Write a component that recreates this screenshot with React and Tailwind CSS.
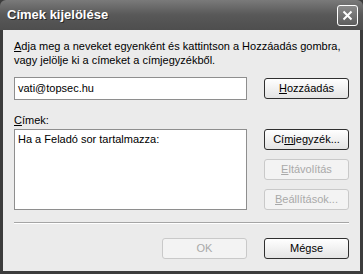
const font = { fontFamily: '"Liberation Sans", Arial, sans-serif' };

const Btn = ({ children, disabled, className = "" }) => (
  <div
    className={`flex items-center justify-center h-[21px] w-[85px] rounded-[3px] border text-[11px] ${
      disabled
        ? "border-[#c9c9c9] bg-[#f3f3f3] text-[#a9a9a9]"
        : "border-[#2f2f2f] bg-linear-to-b from-white to-[#e4e4e4] text-black"
    } ${className}`}
  >
    {children}
  </div>
);

export default function App() {
  return (
    <div className="w-[363px] h-[274px] flex flex-col bg-[#3c3c3c] select-none" style={font}>
      <div className="h-[30px] flex items-center justify-between pl-[7px] pr-[5px] rounded-t-[6px] bg-linear-to-b from-[#7a7a7a] via-[#585858] to-[#4e4e4e]">
        <span
          className="text-white font-bold text-[13px]"
          style={{ textShadow: "1px 1px 0 #2a2a2a" }}
        >
          Címek kijelölése
        </span>
        <div className="w-[21px] h-[21px] mt-[1px] rounded-[3px] border border-white bg-linear-to-b from-[#8a8a8a] to-[#5e5e5e] flex items-center justify-center">
          <svg width="11" height="11" viewBox="0 0 11 11">
            <path d="M1.5 1.5 L9.5 9.5 M9.5 1.5 L1.5 9.5" stroke="white" strokeWidth="2" />
          </svg>
        </div>
      </div>

      <div className="flex-1 mx-[3px] mb-[3px] bg-[#ebebeb] px-[11px] pt-[9px] flex flex-col text-[11px] text-black">
        <p className="leading-[14px]">
          <span className="underline">A</span>dja meg a neveket egyenként és kattintson a Hozzáadás gombra,
          <br />
          vagy jelölje ki a címeket a címjegyzékből.
        </p>

        <div className="flex items-center gap-[17px] mt-[10px]">
          <div className="w-[233px] h-[23px] border border-[#8e8e8e] bg-white flex items-center px-[3px]">
            vati@topsec.hu
          </div>
          <Btn>
            <span className="underline">H</span>ozzáadás
          </Btn>
        </div>

        <div className="flex gap-[17px] mt-[14px]">
          <div className="w-[233px] flex flex-col">
            <span className="leading-[13px]">
              <span className="underline">C</span>ímek:
            </span>
            <div className="mt-[2px] h-[81px] border border-[#8e8e8e] bg-white px-[3px] pt-[2px] leading-[14px]">
              Ha a Feladó sor tartalmazza:
            </div>
          </div>
          <div className="flex flex-col gap-[9px] pt-[15px]">
            <Btn>
              Cí<span className="underline">m</span>jegyzék...
            </Btn>
            <Btn disabled>
              <span className="underline">E</span>ltávolítás
            </Btn>
            <Btn disabled>
              <span className="underline">B</span>eállítások...
            </Btn>
          </div>
        </div>

        <div className="mt-[12px] h-[2px] border-t border-[#a5a5a5] border-b border-b-white" />

        <div className="flex justify-end gap-[17px] mt-[14px]">
          <Btn disabled>OK</Btn>
          <Btn>Mégse</Btn>
        </div>
      </div>
    </div>
  );
}
